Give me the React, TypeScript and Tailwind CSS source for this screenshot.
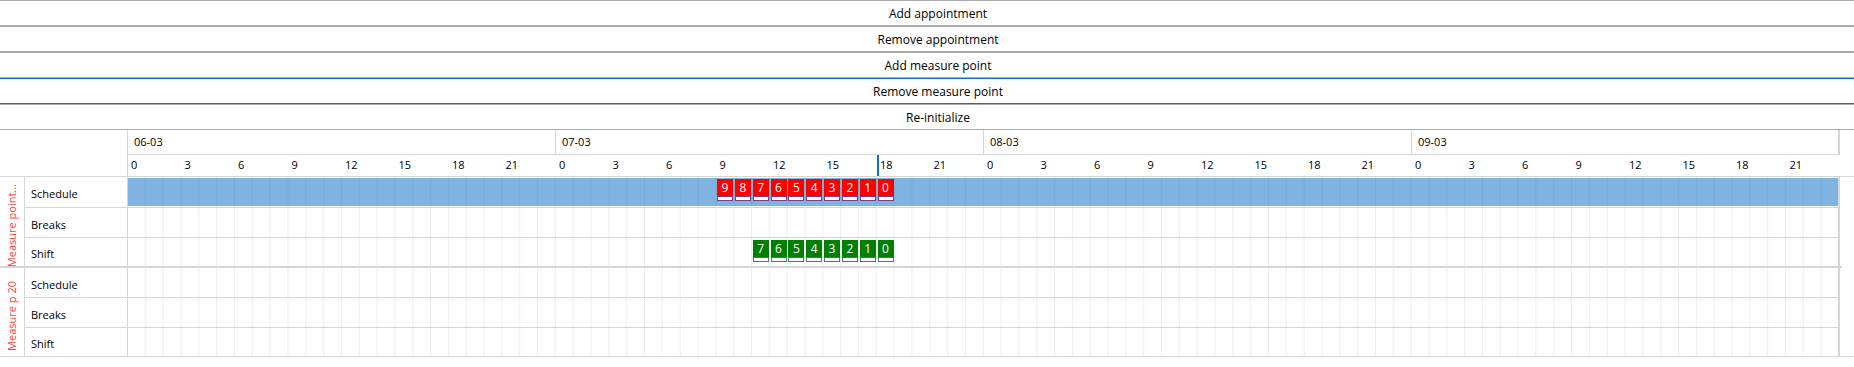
const HOUR = 428 / 24;
const DAYS = ["06-03", "07-03", "08-03", "09-03"];
const TICKS = [0, 3, 6, 9, 12, 15, 18, 21];

const buttons = [
  { label: "Add appointment", hover: false },
  { label: "Remove appointment", hover: false },
  { label: "Add measure point", hover: false },
  { label: "Remove measure point", hover: true },
  { label: "Re-initialize", hover: false },
];

type Chip = { n: number; hour: number };

// countdown chips, hour is counted from the first day's midnight
const scheduleChips: Chip[] = [9, 8, 7, 6, 5, 4, 3, 2, 1, 0].map((n, i) => ({ n, hour: 33 + i }));
const shiftChips: Chip[] = [7, 6, 5, 4, 3, 2, 1, 0].map((n, i) => ({ n, hour: 35 + i }));

function ChipView({ chip, green }: { chip: Chip; green?: boolean }) {
  return (
    <div
      className="absolute top-[2px] flex w-[16px] flex-col"
      style={{ left: chip.hour * HOUR + 0.5 }}
    >
      <div
        className={`flex h-[17px] items-center justify-center text-[12px] leading-none text-white ${
          green ? "bg-[#008000]" : "bg-[#ff0000]"
        }`}
      >
        {chip.n}
      </div>
      <div
        className={`h-[5px] border bg-white ${green ? "border-[#2f8470]" : "border-[#7a3f86]"}`}
      />
    </div>
  );
}

function Row({
  label,
  height,
  border,
  children,
}: {
  label: string;
  height: string;
  border: boolean;
  children?: React.ReactNode;
}) {
  return (
    <div className={`flex ${height} ${border ? "border-b border-[#d6d6d6]" : ""}`}>
      <div className="flex w-[103px] shrink-0 items-center border-r border-[#d6d6d6] pl-[6px] pt-[5px] text-[11px]">
        {label}
      </div>
      <div className="relative w-[1712px] shrink-0 border-r-2 border-[#d6d6d6] bg-[linear-gradient(to_left,#eeeeee_1px,transparent_1px)] bg-[length:17.8333px_100%]">
        {children}
      </div>
    </div>
  );
}

function Group({
  title,
  last,
  schedule,
  shift,
}: {
  title: string;
  last?: boolean;
  schedule?: React.ReactNode;
  shift?: React.ReactNode;
}) {
  return (
    <div className={`flex w-[1842px] ${last ? "" : "border-b-2 border-[#d6d6d6]"}`}>
      <div
        className={`flex w-[25px] shrink-0 items-center justify-center overflow-hidden border-r border-[#d6d6d6] ${
          last ? "h-[88px]" : "h-[89px]"
        }`}
      >
        <span className="translate-y-[4px] rotate-180 text-[11px] whitespace-nowrap text-[#ff3d3d] [writing-mode:vertical-rl]">
          {title}
        </span>
      </div>
      <div className="flex flex-col">
        <Row label="Schedule" height={last ? "h-[30px]" : "h-[31px]"} border>
          {schedule}
        </Row>
        <Row label="Breaks" height="h-[30px]" border />
        <Row label="Shift" height="h-[28px]" border={false}>
          {shift}
        </Row>
      </div>
    </div>
  );
}

export default function App() {
  return (
    <div className="w-[1854px] bg-white font-['Open_Sans',sans-serif] text-black">
      {buttons.map((b) => (
        <div
          key={b.label}
          className={`flex h-[26px] items-center justify-center border-y bg-white pt-px pl-[22px] text-[12px] ${
            b.hover ? "border-[#0a74c8]" : "border-[#adadad]"
          }`}
        >
          {b.label}
        </div>
      ))}

      <div className="flex h-[47px] border-b border-[#d6d6d6]">
        <div className="w-[128px] shrink-0 border-r border-[#d6d6d6]" />
        <div className="flex w-[1712px] flex-col">
          <div className="flex h-[25px]">
            {DAYS.map((d, i) => (
              <div
                key={d}
                className={`flex w-[428px] shrink-0 items-center border-b border-[#d6d6d6] pl-[6px] text-[11px] ${
                  i === DAYS.length - 1 ? "border-r-2" : "border-r"
                }`}
              >
                {d}
              </div>
            ))}
          </div>
          <div className="relative flex h-[21px]">
            {DAYS.map((d) => (
              <div key={d} className="flex w-[428px] shrink-0">
                {TICKS.map((t) => (
                  <div key={t} className="flex w-[53.5px] shrink-0 items-center pl-[3px] text-[11px]">
                    {t}
                  </div>
                ))}
              </div>
            ))}
            <div className="absolute top-0 left-[749px] h-full w-[2px] bg-[#0a6fcf]" />
          </div>
        </div>
      </div>

      <div className="w-[1854px] border-b border-[#d6d6d6]">
        <Group
          title="Measure point..."
          schedule={
            <>
              <div className="mt-px h-[28px] bg-[#006ac6]/50" />
              {scheduleChips.map((c) => (
                <ChipView key={c.n} chip={c} />
              ))}
            </>
          }
          shift={shiftChips.map((c) => (
            <ChipView key={c.n} chip={c} green />
          ))}
        />
        <Group title="Measure p 20" last />
      </div>
    </div>
  );
}
